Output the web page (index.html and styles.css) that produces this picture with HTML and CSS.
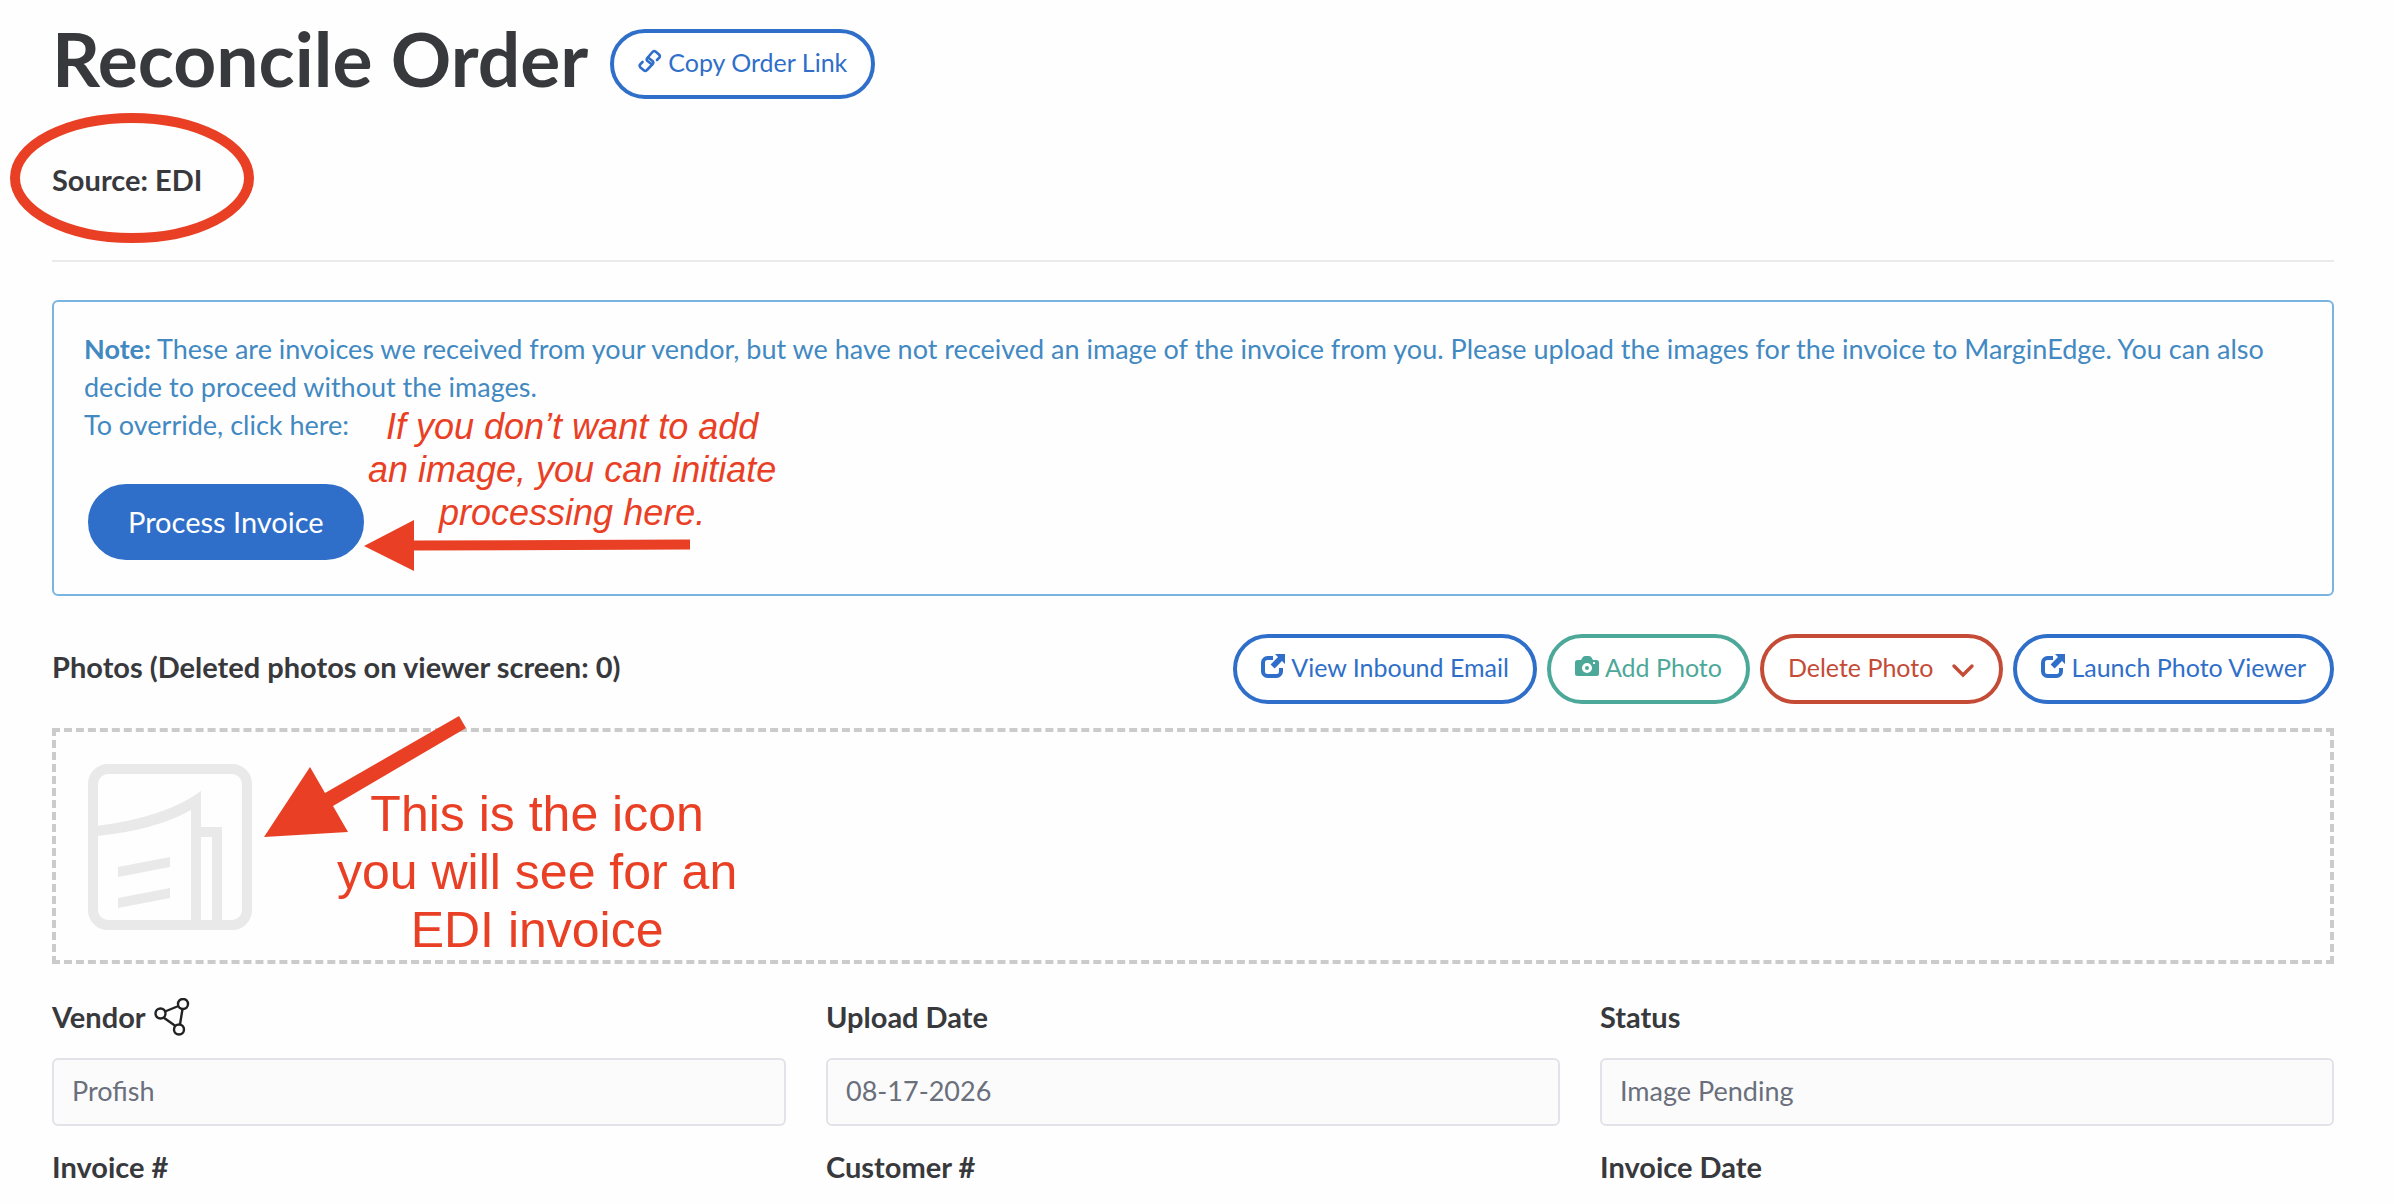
FILE: index.html
```
<!DOCTYPE html>
<html lang="en">
	<head>
		<meta charset="utf-8">
		<title>Reconcile Order</title>
		<link rel="stylesheet" href="styles.css">
	</head>
	<body>
		<div class="page">
			<header class="pageHeader">
				<h1>Reconcile Order</h1>
				<button class="btn blue" type="button">
					<svg class="icon" viewBox="0 0 24 24"><g fill="none" stroke="currentColor" stroke-width="2.600" stroke-linecap="round" stroke-linejoin="round"><path d="M14 15.500L9.500 12Q8 10.500 9.300 9L14.500 3Q15.800 1.300 17.500 2.600L21 5.500Q22.500 7 21.300 8.600L19 11"/><path d="M10 8.500L14.500 12Q16 13.500 14.700 15L9 21Q7.700 22.700 6 21.400L2.500 18.500Q1 17 2.200 15.400L4.500 13"/></g></svg>
					Copy Order Link
				</button>
			</header>

			<div class="source">
				<span class="sourceText">Source: EDI
					<svg class="circle" viewBox="0 0 246 132"><ellipse cx="123" cy="66" rx="117" ry="60" fill="none" stroke="#e94025" stroke-width="10"/></svg>
				</span>
			</div>
			<hr>

			<section class="alert">
				<p><strong>Note:</strong> These are invoices we received from your vendor, but we have not received an image of the invoice from you. Please upload the images for the invoice to MarginEdge. You can also decide to proceed without the images.<br>To override, click here:</p>
				<button class="btn primary" type="button">Process Invoice</button>
				<div class="callout process">If you don’t want to add<br>an image, you can initiate<br>processing here.</div>
				<svg class="arrow left" viewBox="0 0 328 52"><path d="M0 26L50 0V20.500L326 19.500V29.500L50 30.500V51z" fill="#e94025"/></svg>
			</section>

			<div class="photoBar">
				<h2>Photos (Deleted photos on viewer screen: 0)</h2>
				<div class="actions">
					<button class="btn blue" type="button">
						<svg class="icon" viewBox="0 0 24 24"><path d="M12 4H6.500A4.500 4.500 0 0 0 2 8.500v9A4.500 4.500 0 0 0 6.500 22h9a4.500 4.500 0 0 0 4.500-4.500V14" fill="none" stroke="currentColor" stroke-width="4"/><path d="M14 0h10v10l-3-3-7.400 7.400-4-4L17 3z" fill="currentColor"/></svg>
						View Inbound Email
					</button>
					<button class="btn green" type="button">
						<svg class="icon" viewBox="0 0 24 24"><path fill="currentColor" fill-rule="evenodd" d="M2.500 6H6l1.500-2.500Q8.200 2 10 2h4q1.800 0 2.500 1.500L18 6h3.500A2.500 2.500 0 0 1 24 8.500v11a2.500 2.500 0 0 1-2.500 2.500h-19A2.500 2.500 0 0 1 0 19.500v-11A2.500 2.500 0 0 1 2.500 6zM12 9a5 5 0 1 0 0 10 5 5 0 0 0 0-10zm0 3a2 2 0 1 1 0 4 2 2 0 0 1 0-4zM18 8v2h2V8z"/></svg>
						Add Photo
					</button>
					<button class="btn red" type="button">
						Delete Photo
						<svg class="icon chevron" viewBox="0 0 24 24"><path d="M3 9l9 9 9-9" fill="none" stroke="currentColor" stroke-width="3.400" stroke-linecap="round"/></svg>
					</button>
					<button class="btn blue" type="button">
						<svg class="icon" viewBox="0 0 24 24"><path d="M12 4H6.500A4.500 4.500 0 0 0 2 8.500v9A4.500 4.500 0 0 0 6.500 22h9a4.500 4.500 0 0 0 4.500-4.500V14" fill="none" stroke="currentColor" stroke-width="4"/><path d="M14 0h10v10l-3-3-7.400 7.400-4-4L17 3z" fill="currentColor"/></svg>
						Launch Photo Viewer
					</button>
				</div>
			</div>

			<section class="photos">
				<svg class="thumb" viewBox="0 0 164 166"><rect x="5" y="5" width="154" height="156" rx="15" fill="none" stroke="#e9e9e9" stroke-width="10"/><path d="M9 62Q78 53 113 27V63H134V158H124V73H113V158H103V46Q68 66 9 72zM30 103L82 93V103L30 113zM30 134L82 124V134L30 144z" fill="#e9e9e9"/></svg>
				<div class="callout icon-note">This is the icon<br>you will see for an<br>EDI invoice</div>
				<svg class="arrow diagonal" viewBox="0 0 204 122"><path d="M0 121L46 51 61 77 195 0 202 12 69 90 84 116z" fill="#e94025"/></svg>
			</section>

			<form class="fields">
				<div class="field">
					<label for="vendor">Vendor
						<svg class="share" viewBox="0 0 36 38"><g fill="none" stroke="#222" stroke-width="2.400"><circle cx="6.500" cy="15.500" r="5"/><circle cx="29" cy="6" r="5"/><circle cx="25" cy="31.500" r="5"/><path d="M11 13.500L24.500 8M9.500 19.500L21.500 28M28.500 11L26 26.500"/></g></svg>
					</label>
					<input id="vendor" type="text" value="Profish" readonly>
				</div>
				<div class="field">
					<label for="upload">Upload Date</label>
					<input id="upload" type="text" value="08-17-2026" readonly>
				</div>
				<div class="field">
					<label for="status">Status</label>
					<input id="status" type="text" value="Image Pending" readonly>
				</div>
				<div class="field">
					<label for="invoice">Invoice #</label>
					<input id="invoice" type="text">
				</div>
				<div class="field">
					<label for="customer">Customer #</label>
					<input id="customer" type="text">
				</div>
				<div class="field">
					<label for="invoiceDate">Invoice Date</label>
					<input id="invoiceDate" type="text">
				</div>
			</form>
		</div>
	</body>
</html>
```
FILE: styles.css
```
* {
	box-sizing: border-box;
}

body {
	margin: 0px;
	background: #fefefe;
	color: #38393d;
	font-family: Lato, "Open Sans", sans-serif;
	font-size: 27px;
	line-height: 38px;
}

h1, h2, p {
	margin: 0px;
}

/* the page goes on below the fold */
.page {
	height: 100vh;
	overflow: hidden;
	padding: 16px 60px 0px 52px;
}

.pageHeader {
	display: flex;
	align-items: flex-end;
	gap: 22px;
}

h1 {
	font-size: 75px;
	line-height: 84px;
	font-weight: 700;
	padding-bottom: 12px;
}

h2 {
	font-size: 29px;
	line-height: 38px;
	font-weight: 700;
	padding-bottom: 4px;
}

.btn {
	display: inline-flex;
	align-items: center;
	gap: 6px;
	height: 70px;
	padding: 0px 24px 4px;
	border: 4px solid currentColor;
	border-radius: 35px;
	background: #fff;
	font-family: inherit;
	font-size: 25px;
	white-space: nowrap;
	cursor: pointer;
}

.pageHeader .btn {
	margin-bottom: 13px;
}

.btn.blue { color: #2f6fc9; }
.btn.green { color: #4ca898; }
.btn.red { color: #c44b36; }

.btn.primary {
	height: 76px;
	margin: 40px 4px 0px;
	padding: 0px 36px 2px;
	border-radius: 38px;
	border-color: #2f6fc9;
	background: #2f6fc9;
	color: #fff;
	font-size: 29px;
}

.icon {
	width: 24px;
	height: 24px;
	margin-bottom: 2px;
}

.icon.chevron {
	margin: 4px 0px 0px 12px;
}

.source {
	padding: 49px 0px 61px;
	font-size: 29px;
	font-weight: 700;
}

.sourceText {
	position: relative;
}

hr {
	height: 2px;
	margin: 0px 0px 38px;
	border: none;
	background: #e9eaec;
}

.alert {
	position: relative;
	padding: 28px 30px 34px;
	border: 2px solid #7ab5e2;
	border-radius: 6px;
	color: #4289c2;
}

/* red notes drawn over the page */
.circle {
	position: absolute;
	left: -43px;
	top: -50px;
	width: 246px;
	height: 132px;
}

.callout {
	position: absolute;
	color: #e94025;
	font-family: "Liberation Sans", Arial, sans-serif;
	text-align: center;
	white-space: nowrap;
}

.callout.process {
	left: 314px;
	top: 103px;
	font-size: 36px;
	line-height: 43px;
	font-style: italic;
}

.callout.icon-note {
	left: 281px;
	top: 53px;
	font-size: 50px;
	line-height: 58px;
}

.arrow {
	position: absolute;
}

.arrow.left {
	left: 310px;
	top: 218px;
	width: 328px;
	height: 52px;
}

.arrow.diagonal {
	left: 208px;
	top: -16px;
	width: 204px;
	height: 122px;
}

.photoBar {
	display: flex;
	align-items: center;
	justify-content: space-between;
	margin: 38px 0px 24px;
}

.actions {
	display: flex;
	gap: 10px;
}

.photos {
	position: relative;
	padding: 32px 32px 30px;
	border: 4px dashed #cbcbcb;
}

.thumb {
	display: block;
	width: 164px;
	height: 166px;
}

.fields {
	display: grid;
	grid-template-columns: repeat(3, 1fr);
	gap: 20px 40px;
	margin-top: 32px;
}

.field label {
	display: flex;
	align-items: center;
	gap: 8px;
	height: 42px;
	font-size: 29px;
	font-weight: 700;
}

.field input {
	width: 100%;
	height: 68px;
	margin-top: 20px;
	padding: 0px 18px 4px;
	border: 2px solid #e2e2e8;
	border-radius: 6px;
	background: #fbfbfb;
	color: #6a6f7c;
	font-family: inherit;
	font-size: 27px;
}

.share {
	width: 36px;
	height: 38px;
}
```
